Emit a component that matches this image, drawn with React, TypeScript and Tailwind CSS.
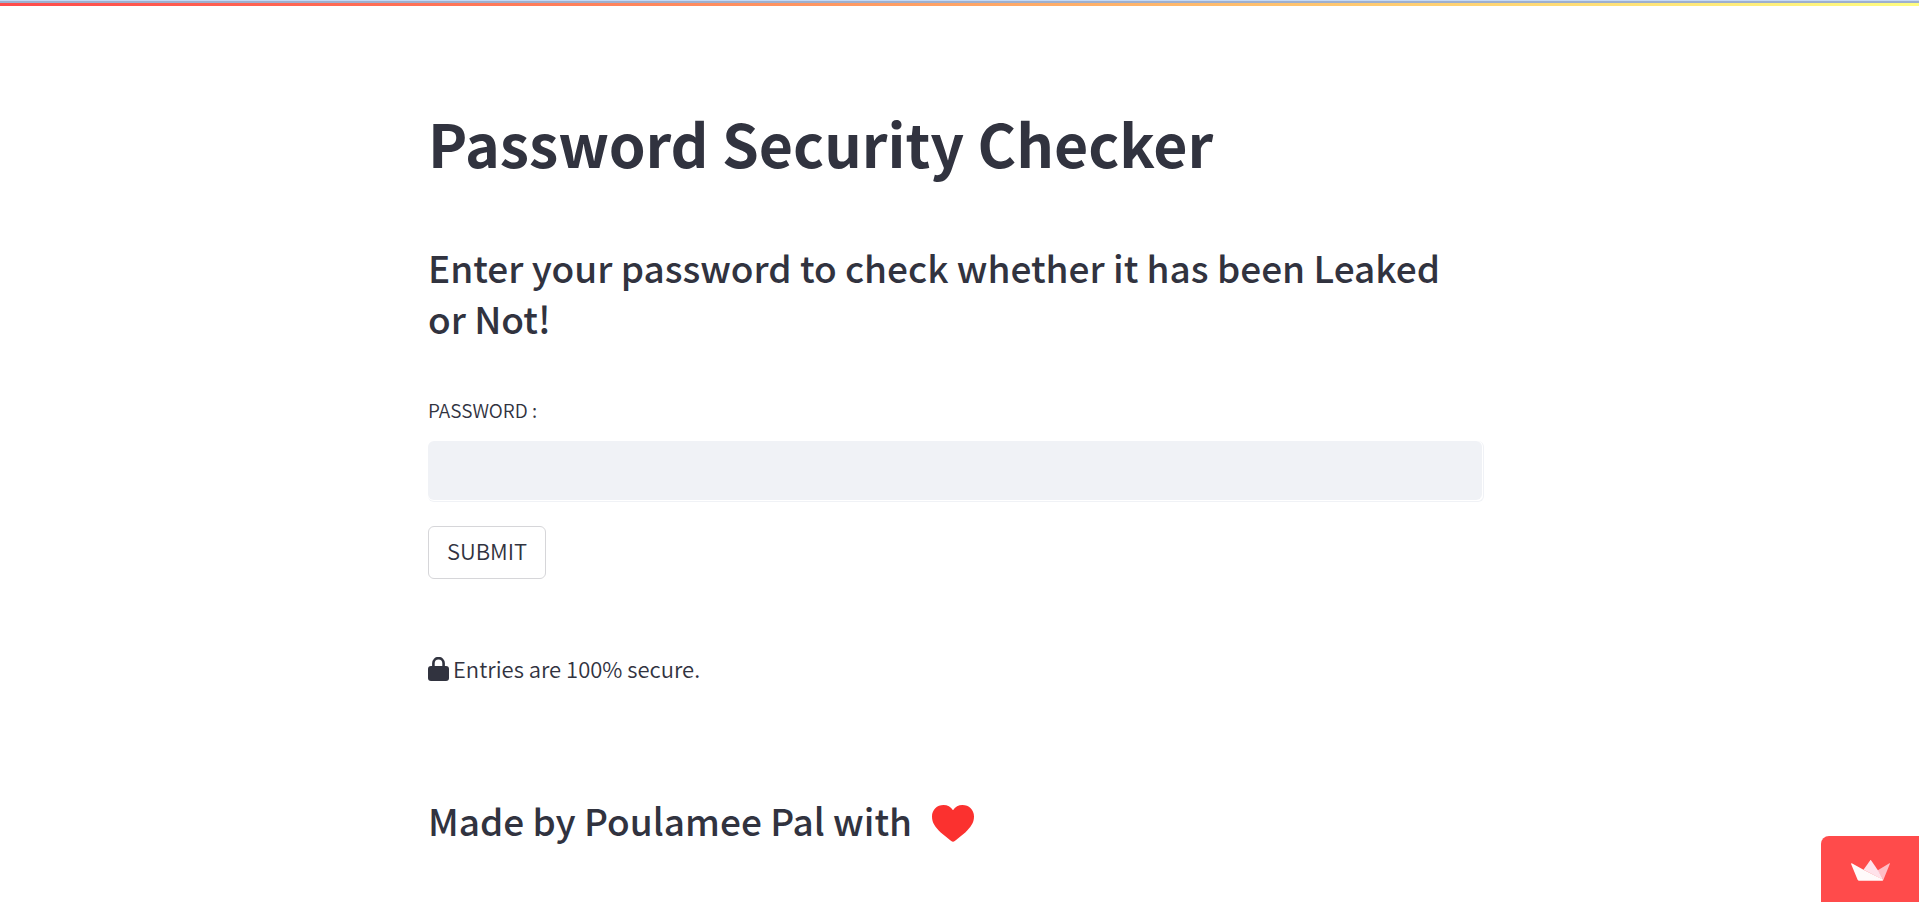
function LockIcon() {
  return (
    <svg viewBox="0 0 21 24" className="mt-0.5 h-6 w-[21px] shrink-0" aria-hidden="true">
      <path d="M5.400 11V6.200a5.100 5.100 0 0 1 10.200 0V11" fill="none" stroke="#31333f" strokeWidth="2.6" />
      <rect x="0" y="9" width="21" height="15" rx="3" fill="#31333f" />
    </svg>
  );
}

function HeartIcon() {
  return (
    <svg viewBox="0 0 42 37" className="mt-1.5 h-[37px] w-[42px] shrink-0" role="img" aria-label="love">
      <path
        d="M21 5.200C18.900 1.800 15.400 0 11.600 0 5 0 0 4.700 0 11.600c0 6.300 3.300 10.700 8.700 15.800l10.500 8.700c1.200 1 2.400 1 3.600 0l10.500-8.700C38.700 22.300 42 17.900 42 11.600 42 4.700 37 0 30.400 0 26.600 0 23.100 1.800 21 5.200Z"
        fill="#fb312f"
      />
    </svg>
  );
}

function CrownIcon() {
  return (
    <svg viewBox="0 0 39 21" className="mt-0.5 h-[21px] w-[39px]" aria-hidden="true">
      <path d="M38.400 3.200c.3-.2.700.1.500.500l-6.500 16-6-9.300Z" fill="#ffbcc4" />
      <path d="M12.500 9.800 19.100.4c.3-.4.800-.4 1.100 0l6.700 9.900 5.500 9.800Z" fill="#ffe2ea" />
      <path d="M.1 3.900c-.2-.5.300-.9.700-.7l11.700 6.600 19.900 10c-.2.600-.6.900-1.200.9H8.200c-.8 0-1.300-.4-1.600-1Z" fill="#fffafa" />
    </svg>
  );
}

export default function App() {
  return (
    <div className="min-h-screen bg-white font-['Noto_Sans_CJK_SC',sans-serif] font-[350] text-[#31333f]">
      <header>
        <div className="h-px bg-[#c6daf6]" />
        <div className="h-0.5 bg-[#9eb0cf]" />
        <div className="h-[3px] bg-linear-to-r/srgb from-[#ff4b4b] to-[#fffd80]" />
      </header>

      <main className="pt-[97px] pr-[7px]">
        <div className="mx-auto w-full max-w-[1056px]">
          <h1 className="text-[59px] leading-[80px] font-bold">Password Security Checker</h1>
          <h2 className="mt-[59px] text-[37px] leading-[51px] font-medium">
            Enter your password to check whether it has been Leaked or Not!
          </h2>

          <form className="mt-[51px]" onSubmit={(e) => e.preventDefault()}>
            <label htmlFor="password" className="block text-[19px] leading-[30px]">
              PASSWORD :
            </label>
            <div className="mt-4 rounded-md border-r border-b border-[#f0f2f6] bg-white pr-px pb-px">
              <input
                id="password"
                type="text"
                autoComplete="off"
                className="block h-[59px] w-full rounded-md bg-[#f0f2f6] px-4 text-[22px] outline-none"
              />
            </div>
            <button
              type="submit"
              className="mt-6 block h-[53px] rounded-md border border-[#d6d6d9] bg-white px-[18px] pb-1.5 text-[22px] leading-[38px]"
            >
              SUBMIT
            </button>
          </form>

          <p className="mt-[70px] flex items-center gap-1 text-[22px] leading-[38px]">
            <LockIcon />
            Entries are 100% secure.
          </p>

          <h2 className="mt-[108px] flex items-center gap-5 text-[37px] leading-[51px] font-medium">
            Made by Poulamee Pal with
            <HeartIcon />
          </h2>
        </div>
      </main>

      <a
        href="#"
        aria-label="Streamlit"
        className="fixed right-0 bottom-0 flex h-[66px] w-[98px] items-center justify-center rounded-tl-lg bg-[#ff4b4b]"
      >
        <CrownIcon />
      </a>
    </div>
  );
}
